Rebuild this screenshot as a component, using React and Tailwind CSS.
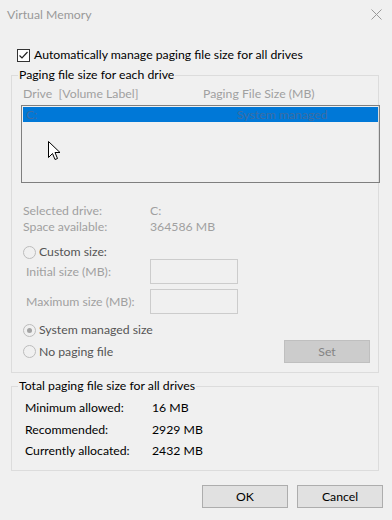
import React from "react";

function Radio({ checked }) {
  return (
    <span className="w-[13px] h-[13px] rounded-full border border-[#bcbcbc] bg-[#f0f0f0] flex items-center justify-center shrink-0">
      {checked && <span className="w-[5px] h-[5px] rounded-full bg-[#a3a3a3]" />}
    </span>
  );
}

function Btn({ children, disabled, className = "" }) {
  return (
    <div
      className={
        "w-[86px] h-[23px] flex items-center justify-center border " +
        (disabled
          ? "bg-[#cccccc] border-[#bfbfbf] text-[#838383] "
          : "bg-[#e1e1e1] border-[#adadad] text-black ") +
        className
      }
    >
      {children}
    </div>
  );
}

export default function App() {
  return (
    <div
      className="w-[392px] h-[520px] bg-[#f0f0f0] flex flex-col text-[12.25px] leading-[16px] text-black relative overflow-hidden"
      style={{ fontFamily: 'Lato, "Noto Sans", sans-serif' }}
    >
      {/* title bar */}
      <div className="h-[30px] flex items-center justify-between pl-[7px] pr-[10px] text-[#999999]">
        <span>Virtual Memory</span>
        <svg width="11" height="11" viewBox="0 0 11 11" className="mb-[1px]">
          <path d="M0.5 0.5 L10.5 10.5 M10.5 0.5 L0.5 10.5" stroke="#9a9a9a" strokeWidth="1" />
        </svg>
      </div>

      {/* checkbox row */}
      <div className="mt-[17px] h-[16px] flex items-center pl-[17px]">
        <span className="w-[13px] h-[13px] border border-[#333333] bg-white flex items-center justify-center">
          <svg width="11" height="11" viewBox="0 0 11 11">
            <path d="M1.5 5.5 L4 8 L9.5 2" stroke="#222" strokeWidth="1.2" fill="none" />
          </svg>
        </span>
        <span className="ml-[4px]">Automatically manage paging file size for all drives</span>
      </div>

      {/* group 1 */}
      <fieldset className="mt-[5px] ml-[11px] w-[368px] border border-[#dcdcdc] pl-[6px] pb-[9px] min-w-0">
        <legend className="px-[1px] leading-[14px]">Paging file size for each drive</legend>
        <div className="mt-[4px] flex text-[#a0a0a0]">
          <span className="ml-[5px] w-[180px]">Drive&nbsp; [Volume Label]</span>
          <span>Paging File Size (MB)</span>
        </div>
        <div className="mt-[3px] ml-[3px] w-[359px] h-[78px] border border-[#7f7f7f] p-[1px]">
          <div className="h-[15px] bg-[#0078d7] flex items-center text-[#3d6da3] leading-[15px]">
            <span className="ml-[3px] w-[211px]">C:</span>
            <span>System managed</span>
          </div>
        </div>

        <div className="mt-[20px] flex text-[#a0a0a0]">
          <span className="ml-[5px] w-[127px]">Selected drive:</span>
          <span>C:</span>
        </div>
        <div className="flex text-[#a0a0a0]">
          <span className="ml-[5px] w-[127px]">Space available:</span>
          <span>364586 MB</span>
        </div>

        <div className="mt-[10px] h-[14px] flex items-center ml-[5px] text-[#555555]">
          <Radio />
          <span className="ml-[3px]">Custom size:</span>
        </div>
        <div className="h-[25px] flex items-center">
          <span className="ml-[8px] w-[124px] text-[#a0a0a0]">Initial size (MB):</span>
          <span className="w-[88px] h-[25px] border border-[#cccccc] bg-[#f0f0f0]" />
        </div>
        <div className="mt-[5px] h-[25px] flex items-center">
          <span className="ml-[8px] w-[124px] text-[#a0a0a0]">Maximum size (MB):</span>
          <span className="w-[88px] h-[25px] border border-[#cccccc] bg-[#f0f0f0]" />
        </div>

        <div className="mt-[8px] h-[16px] flex items-center ml-[5px] text-[#555555]">
          <Radio checked />
          <span className="ml-[3px]">System managed size</span>
        </div>
        <div className="mt-[2px] h-[23px] flex items-center">
          <div className="ml-[5px] w-[261px] flex items-center text-[#555555]">
            <Radio />
            <span className="ml-[3px]">No paging file</span>
          </div>
          <Btn disabled>Set</Btn>
        </div>
      </fieldset>

      {/* group 2 */}
      <fieldset className="mt-[6px] ml-[11px] w-[368px] border border-[#dcdcdc] pl-[6px] pb-[11px] min-w-0">
        <legend className="px-[1px] leading-[14px]">Total paging file size for all drives</legend>
        <div className="mt-[7px] flex">
          <span className="ml-[7px] w-[127px]">Minimum allowed:</span>
          <span>16 MB</span>
        </div>
        <div className="mt-[6px] flex">
          <span className="ml-[7px] w-[127px]">Recommended:</span>
          <span>2929 MB</span>
        </div>
        <div className="mt-[5px] flex">
          <span className="ml-[7px] w-[127px]">Currently allocated:</span>
          <span>2432 MB</span>
        </div>
      </fieldset>

      {/* buttons */}
      <div className="mt-[14px] flex justify-end gap-[9px] pr-[9px]">
        <Btn>OK</Btn>
        <Btn>Cancel</Btn>
      </div>

      {/* mouse cursor */}
      <svg
        className="absolute left-[48px] top-[141px]"
        width="13"
        height="20"
        viewBox="0 0 13 20"
      >
        <path
          d="M0.5 0.5 V16.5 L4.5 12.5 L7 18.5 L9.5 17.5 L7 11.5 H12 Z"
          fill="#ffffff"
          stroke="#000000"
          strokeWidth="1"
          strokeLinejoin="miter"
        />
      </svg>
    </div>
  );
}
